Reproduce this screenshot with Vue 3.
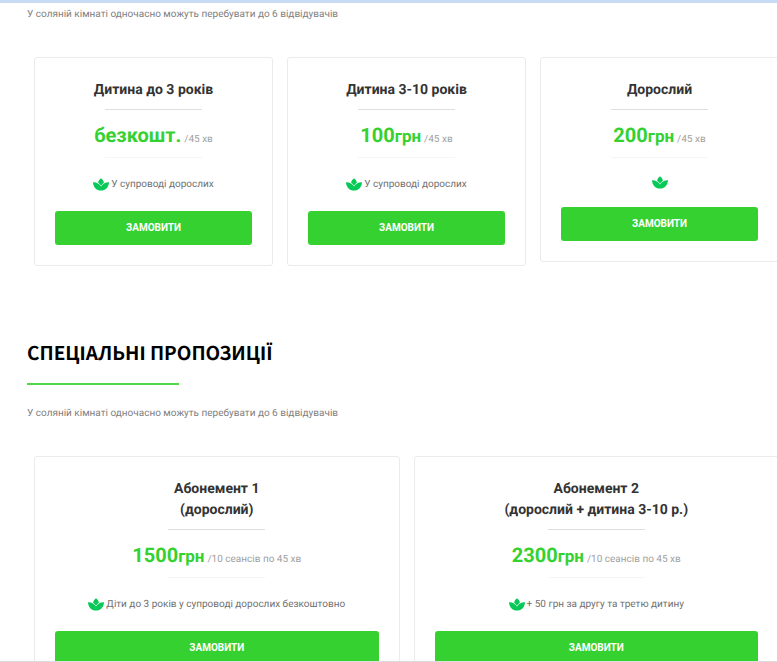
<template>
  <div class="page">
    <main class="content">
      <section v-for="section in sections" :key="section.layout" class="pricing">
        <h2 v-if="section.heading" class="heading">{{ section.heading }}</h2>
        <p class="lead">У соляній кімнаті одночасно можуть перебувати до 6 відвідувачів</p>
        <div class="cards" :class="section.layout">
          <article v-for="plan in section.plans" :key="plan.title[0]" class="card">
            <h3 class="card-title">
              <span v-for="line in plan.title" :key="line">{{ line }}</span>
            </h3>
            <p class="price">
              <strong class="amount">{{ plan.amount }}<small v-if="plan.currency">{{ plan.currency }}</small></strong>
              <span class="unit">{{ plan.unit }}</span>
            </p>
            <div class="note">
              <svg class="leaf" viewBox="0 0 16 17" aria-hidden="true">
                <path d="M8 2.2C9.6 3.4 10.7 5 10.9 6.8Q9.2 8 8 9.8Q6.8 8 5.1 6.8C5.3 5 6.4 3.4 8 2.2Z" />
                <path d="M0 6.3C3.7 6.1 6.4 7.8 8 10.6C9.6 7.8 12.3 6.1 16 6.3C15.8 11 12.7 14.6 8 14.6C3.3 14.6 .2 11 0 6.3Z" />
              </svg>
              <span v-if="plan.note">{{ plan.note }}</span>
            </div>
            <button type="button" class="order">ЗАМОВИТИ</button>
          </article>
        </div>
      </section>
    </main>
  </div>
</template>

<script setup>
const sections = [
  {
    layout: 'cards-three',
    plans: [
      { title: ['Дитина до 3 років'], amount: 'безкошт.', unit: '/45 хв', note: 'У супроводі дорослих' },
      { title: ['Дитина 3-10 років'], amount: '100', currency: 'грн', unit: '/45 хв', note: 'У супроводі дорослих' },
      { title: ['Дорослий'], amount: '200', currency: 'грн', unit: '/45 хв' }
    ]
  },
  {
    layout: 'cards-two',
    heading: 'СПЕЦІАЛЬНІ ПРОПОЗИЦІЇ',
    plans: [
      {
        title: ['Абонемент 1', '(дорослий)'],
        amount: '1500',
        currency: 'грн',
        unit: '/10 сеансів по 45 хв',
        note: 'Діти до 3 років у супроводі дорослих безкоштовно'
      },
      {
        title: ['Абонемент 2', '(дорослий + дитина 3-10 р.)'],
        amount: '2300',
        currency: 'грн',
        unit: '/10 сеансів по 45 хв',
        note: '+ 50 грн за другу та третю дитину'
      }
    ]
  }
];
</script>

<style>
body {
  margin: 0;
  background: #fff;
}
</style>

<style scoped>
.page {
  box-sizing: border-box;
  height: 100vh;
  overflow: hidden;
  border-top: 3px solid #c9daf5;
  border-bottom: 1px solid #dcdcdc;
  font-family: Roboto, sans-serif;
  text-rendering: geometricPrecision;
  color: #808080;
}

.content {
  padding: 3px 0 0 27px;
}

.pricing {
  margin-bottom: 72px;
}

.lead {
  margin: 0;
  font-size: 10px;
  line-height: 18px;
}

.heading {
  margin: 0 0 20px;
  font-family: 'Noto Sans CJK SC', 'Noto Sans', sans-serif;
  font-size: 19px;
  font-weight: 700;
  line-height: 30px;
  color: #000;
}

.heading::after {
  content: '';
  display: block;
  width: 152px;
  height: 2px;
  margin-top: 15px;
  background: #4fd84b;
}

.cards {
  display: grid;
  gap: 14px;
  align-items: start;
  /* the row runs slightly past the right edge */
  margin: 33px -2px 0 7px;
}

.cards-three {
  grid-template-columns: repeat(3, 1fr);
}

.cards-two {
  grid-template-columns: repeat(2, 1fr);
}

.card {
  padding: 22px 20px 20px;
  border: 1px solid #ebebeb;
  border-radius: 3px;
  text-align: center;
}

.card-title {
  margin: 0;
  font-size: 14px;
  font-weight: 700;
  line-height: 21px;
  color: #333;
}

.card-title span {
  display: block;
}

.card-title::after,
.price::after {
  content: '';
  display: block;
  width: 97px;
  height: 1px;
  margin: 0 auto;
}

.card-title::after {
  margin-top: 8px;
  background: #dedede;
}

.price::after {
  background: #f5f5f5;
}

.price {
  margin: 0 0 16px;
  padding-top: 12px;
  font-size: 10px;
  line-height: 35px;
}

.amount {
  margin-right: 3px;
  font-size: 20px;
  font-weight: 700;
  line-height: 1;
  color: #35d130;
}

.amount small {
  font-size: 17px;
}

.unit {
  color: #a0a0a0;
}

.note {
  display: flex;
  align-items: center;
  justify-content: center;
  gap: 2px;
  margin-bottom: 16px;
  font-size: 10px;
  line-height: 21px;
  color: #707070;
}

.leaf {
  width: 16px;
  height: 17px;
  fill: #08c957;
}

.order {
  display: block;
  width: 100%;
  height: 34px;
  padding: 0 0 2px;
  border: 0;
  border-radius: 3px;
  background: #35d130;
  font-family: inherit;
  font-size: 10px;
  font-weight: 700;
  color: #fff;
  cursor: pointer;
}
</style>
